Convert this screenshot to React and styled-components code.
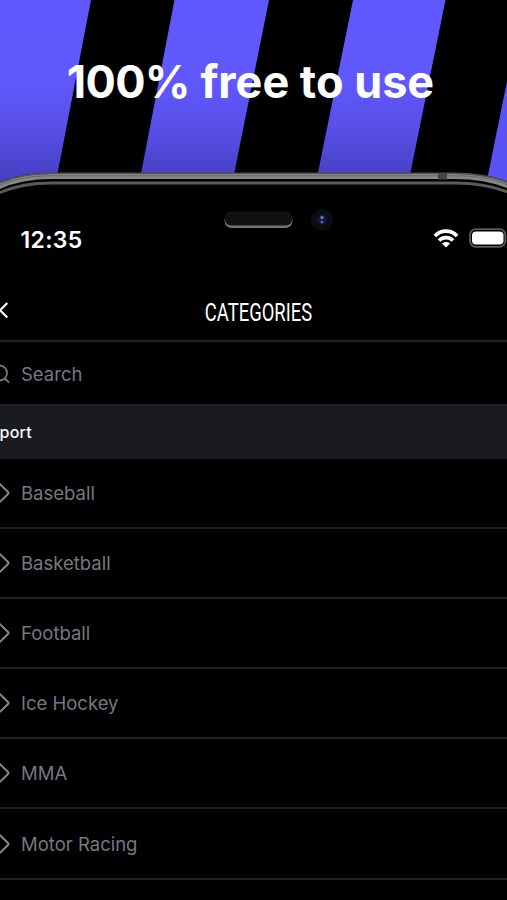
import styled, { createGlobalStyle } from "styled-components";

const GlobalStyle = createGlobalStyle`
    body {
        margin: 0;
        background-color: black;
        font-family: "Inter", sans-serif;
    }
`;
const Container = styled.div`
    width: 507px;
    height: 900px;
    overflow: hidden;
    display: flex;
    flex-direction: column;
    background-color: black;
`;
const Hero = styled.div`
    position: relative;
    height: 202px;
    flex-shrink: 0;
`;
const Backdrop = styled.svg`
    position: absolute;
    top: 0;
    left: 0;
`;
const Title = styled.h1`
    position: relative;
    margin: 0;
    padding-top: 55px;
    padding-right: 6px;
    font-size: 45px;
    line-height: 54px;
    font-weight: 700;
    text-align: center;
    white-space: nowrap;
    color: white;
`;
const Amount = styled.span`
    letter-spacing: -0.7px;
`;
const StatusBar = styled.div`
    height: 78px;
    flex-shrink: 0;
    display: grid;
    grid-template-columns: 200px 1fr 78px;
`;
const Time = styled.span`
    padding: 24px 0 0 20.5px;
    font-size: 23px;
    line-height: 28px;
    font-weight: 600;
    letter-spacing: 0.3px;
    color: white;
`;
const Notch = styled.svg`
    margin-top: 3px;
`;
const Indicators = styled.div`
    display: flex;
    gap: 10px;
    padding: 26px 0 0 4px;

    svg {
        flex-shrink: 0;
    }
`;
const Header = styled.div`
    height: 60px;
    flex-shrink: 0;
    display: grid;
    grid-template-columns: 40px 1fr 30px;
    align-items: center;
    border-bottom: 2px solid #202225;
`;
const Heading = styled.h2`
    margin: 0;
    padding-top: 4px;
    font-family: "Roboto", sans-serif;
    font-size: 26.5px;
    line-height: 32px;
    font-weight: 400;
    text-align: center;
    color: white;
    transform: scaleX(0.695);
`;
const Search = styled.div`
    height: 62px;
    flex-shrink: 0;
    box-sizing: border-box;
    padding-top: 2px;
    display: flex;
    align-items: center;
`;
const Label = styled.span`
    padding-left: 9px;
    font-size: 18.5px;
    line-height: 24px;
    color: #747981;
`;
const Section = styled.div`
    height: 55px;
    flex-shrink: 0;
    box-sizing: border-box;
    display: flex;
    align-items: center;
    background-color: #1a1b1e;
    border-top: 1px solid #24262a;
    font-size: 16px;
    font-weight: 500;
    letter-spacing: 0.2px;
    color: white;
`;
const SectionName = styled.span`
    margin-left: -11px;
`;
const Row = styled.div`
    height: 70.1px;
    flex-shrink: 0;
    box-sizing: border-box;
    display: flex;
    align-items: center;
    border-bottom: 2px solid #202122;
`;

const categories = ["Baseball", "Basketball", "Football", "Ice Hockey", "MMA", "Motor Racing"];

const edge = (y) =>
    `M-2 ${y + 10.5} C14 ${y + 3} 30 ${y} 52 ${y} H455 C477 ${y} 493 ${y + 3} 509 ${y + 9.5}`;

const HeroArt = () => (
    <Backdrop width="507" height="202" viewBox="0 0 507 202">
        <defs>
            <linearGradient id="shade" x1="0" y1="0" x2="0" y2="1">
                <stop offset="0" stopColor="#6159ff" />
                <stop offset="0.4" stopColor="#6058fc" />
                <stop offset="0.65" stopColor="#574fe6" />
                <stop offset="0.88" stopColor="#473fc2" />
            </linearGradient>
        </defs>
        <rect width="507" height="202" fill="url(#shade)" />
        <path d="M523 0 L483 202 H507 V0Z" fill="#5b52f5" />
        <path d="M91 0H174.500L135.500 202H52Z M269 0H353L312 202H228.500Z M445.500 0H523.500L482.500 202H404.500Z" fill="black" />
        <path d={`${edge(173)} V202 H-2Z`} fill="black" />
        <path d={edge(173.2)} fill="none" stroke="#50524f" strokeWidth="1.6" />
        <path d={edge(176.6)} fill="none" stroke="#868883" strokeWidth="5" />
        <path d={edge(175.8)} fill="none" stroke="#5d5f5b" strokeWidth="0.8" />
        <path d={edge(183)} fill="none" stroke="#5a5b58" strokeWidth="2.8" />
        <rect x="438" y="173.500" width="9" height="6" fill="#444543" />
    </Backdrop>
);

const Sensors = () => (
    <Notch width="150" height="34" viewBox="0 0 150 34">
        <rect x="24.500" y="8" width="68" height="15" rx="7" fill="#737373" />
        <rect x="25" y="6.500" width="67" height="14" rx="6" fill="#111" />
        <circle cx="122" cy="15" r="11" fill="#0c0d0f" />
        <circle cx="122" cy="14.500" r="5" fill="#14143c" />
        <circle cx="122" cy="12.500" r="1.700" fill="#6970b5" />
        <circle cx="122" cy="17" r="1.500" fill="#5560a5" />
    </Notch>
);

const Wifi = () => (
    <svg width="26" height="20" viewBox="0 0 26 20" fill="none" stroke="white" strokeWidth="3.700">
        <path d="M1.900 8 C8 1.500 18 1.500 24.100 8" />
        <path d="M6 12.500 C10 8.600 16 8.600 20 12.500" />
        <path d="M9 15.500 C11.400 13.500 14.600 13.500 17 15.500 L13 19.500Z" fill="white" stroke="none" />
    </svg>
);

const Battery = () => (
    <svg width="38" height="20" viewBox="0 0 38 20">
        <rect x="0.900" y="1.200" width="35.500" height="17.600" rx="6" fill="none" stroke="#5b5b5b" strokeWidth="1.800" />
        <rect x="3" y="3.500" width="31.500" height="13" rx="4" fill="white" />
    </svg>
);

const Back = () => (
    <svg width="12" height="20" viewBox="0 0 12 20" fill="none" stroke="white" strokeWidth="2.200">
        <path d="M7.300 3 L0 10.200 L7.300 17.500" />
    </svg>
);

const SearchIcon = () => (
    <svg width="12" height="24" viewBox="0 0 12 24" fill="none" stroke="#747981" strokeWidth="1.800">
        <circle cx="-0.500" cy="11" r="7.500" />
        <path d="M4.700 16.400 L9 20.700" />
    </svg>
);

const Diamond = () => (
    <svg width="12" height="24" viewBox="0 0 12 24" fill="none" stroke="#858a92" strokeWidth="1.900">
        <path d="M-2 2.200 Q-1 2.200 0 3.300 L8 11 Q9 12 8 13 L0 20.700 Q-1 21.800 -2 21.800" />
    </svg>
);

const App = () => {
    return (
        <Container>
            <GlobalStyle />
            <Hero>
                <HeroArt />
                <Title><Amount>100%</Amount> free to use</Title>
            </Hero>
            <StatusBar>
                <Time>12:35</Time>
                <Sensors />
                <Indicators>
                    <Wifi />
                    <Battery />
                </Indicators>
            </StatusBar>
            <Header>
                <Back />
                <Heading>CATEGORIES</Heading>
            </Header>
            <Search>
                <SearchIcon />
                <Label>Search</Label>
            </Search>
            <Section>
                <SectionName>Sport</SectionName>
            </Section>
            {categories.map((name) => (
                <Row key={name}>
                    <Diamond />
                    <Label>{name}</Label>
                </Row>
            ))}
        </Container>
    );
};

export default App;
